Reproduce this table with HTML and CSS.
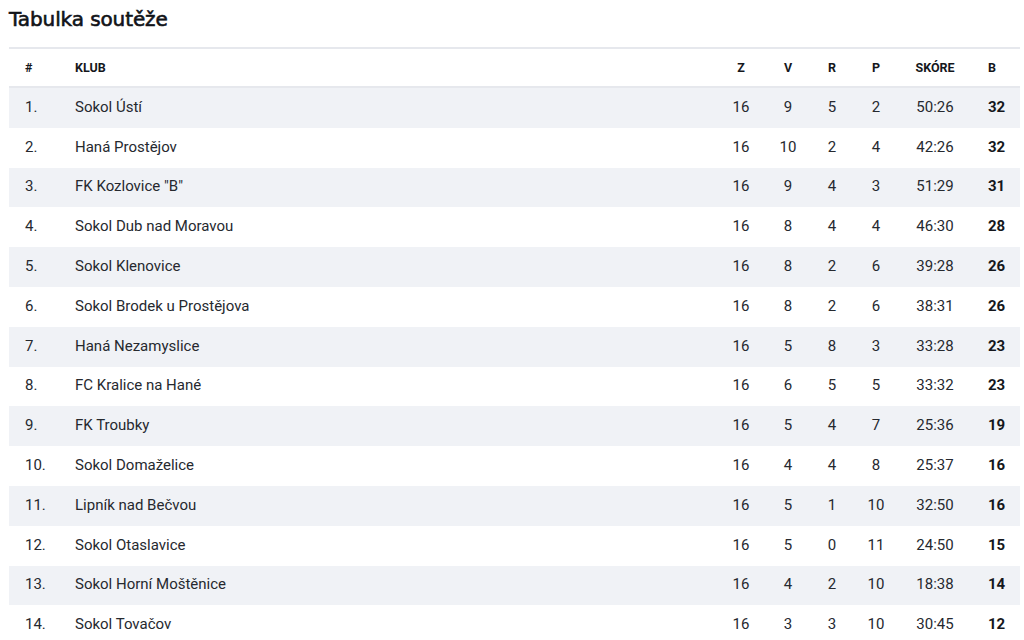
FILE: index.html
```html
<!DOCTYPE html>
<html lang="cs">
<head>
<meta charset="utf-8">
<title>Tabulka soutěže</title>
<link rel="stylesheet" href="styles.css">
</head>
<body>
<main class="page">
  <h2 class="title">Tabulka soutěže</h2>
  <table class="standings">
    <colgroup>
      <col class="c-pos"><col class="c-club"><col class="c-z"><col class="c-v"><col class="c-r"><col class="c-p"><col class="c-score"><col class="c-pts">
    </colgroup>
    <thead>
      <tr><th class="l">#</th><th class="l">Klub</th><th>Z</th><th>V</th><th>R</th><th>P</th><th>Skóre</th><th class="l">B</th></tr>
    </thead>
    <tbody>
      <tr><td class="l">1.</td><td class="l">Sokol Ústí</td><td>16</td><td>9</td><td>5</td><td>2</td><td>50:26</td><td class="pts">32</td></tr>
      <tr><td class="l">2.</td><td class="l">Haná Prostějov</td><td>16</td><td>10</td><td>2</td><td>4</td><td>42:26</td><td class="pts">32</td></tr>
      <tr><td class="l">3.</td><td class="l">FK Kozlovice "B"</td><td>16</td><td>9</td><td>4</td><td>3</td><td>51:29</td><td class="pts">31</td></tr>
      <tr><td class="l">4.</td><td class="l">Sokol Dub nad Moravou</td><td>16</td><td>8</td><td>4</td><td>4</td><td>46:30</td><td class="pts">28</td></tr>
      <tr><td class="l">5.</td><td class="l">Sokol Klenovice</td><td>16</td><td>8</td><td>2</td><td>6</td><td>39:28</td><td class="pts">26</td></tr>
      <tr><td class="l">6.</td><td class="l">Sokol Brodek u Prostějova</td><td>16</td><td>8</td><td>2</td><td>6</td><td>38:31</td><td class="pts">26</td></tr>
      <tr><td class="l">7.</td><td class="l">Haná Nezamyslice</td><td>16</td><td>5</td><td>8</td><td>3</td><td>33:28</td><td class="pts">23</td></tr>
      <tr><td class="l">8.</td><td class="l">FC Kralice na Hané</td><td>16</td><td>6</td><td>5</td><td>5</td><td>33:32</td><td class="pts">23</td></tr>
      <tr><td class="l">9.</td><td class="l">FK Troubky</td><td>16</td><td>5</td><td>4</td><td>7</td><td>25:36</td><td class="pts">19</td></tr>
      <tr><td class="l">10.</td><td class="l">Sokol Domaželice</td><td>16</td><td>4</td><td>4</td><td>8</td><td>25:37</td><td class="pts">16</td></tr>
      <tr><td class="l">11.</td><td class="l">Lipník nad Bečvou</td><td>16</td><td>5</td><td>1</td><td>10</td><td>32:50</td><td class="pts">16</td></tr>
      <tr><td class="l">12.</td><td class="l">Sokol Otaslavice</td><td>16</td><td>5</td><td>0</td><td>11</td><td>24:50</td><td class="pts">15</td></tr>
      <tr><td class="l">13.</td><td class="l">Sokol Horní Moštěnice</td><td>16</td><td>4</td><td>2</td><td>10</td><td>18:38</td><td class="pts">14</td></tr>
      <tr><td class="l">14.</td><td class="l">Sokol Tovačov</td><td>16</td><td>3</td><td>3</td><td>10</td><td>30:45</td><td class="pts">12</td></tr>
    </tbody>
  </table>
</main>
</body>
</html>
```
FILE: styles.css
```css
html, body {
  margin: 0;
  padding: 0;
  background: #ffffff;
}
body {
  font-family: Roboto, "Liberation Sans", sans-serif;
  color: #1d2026;
}
.page {
  padding: 0 4px 0 9px;
}
.title {
  margin: 0;
  padding-top: 6px;
  height: 47px;
  box-sizing: border-box;
  font-family: "DejaVu Sans", sans-serif;
  font-size: 20px;
  font-weight: 400;
  -webkit-text-stroke: 0.6px #111318;
  letter-spacing: -0.1px;
  color: #111318;
  line-height: 26px;
}
.standings {
  width: 1011px;
  border-collapse: collapse;
  table-layout: fixed;
  font-size: 15px;
}
.c-pos { width: 50px; }
.c-club { width: 659px; }
.c-z { width: 46px; }
.c-v { width: 48px; }
.c-r { width: 40px; }
.c-p { width: 48px; }
.c-score { width: 70px; }
.c-pts { width: 50px; }
.standings thead tr {
  border-top: 2px solid #e6e8ed;
  border-bottom: 2px solid #e6e8ed;
}
.standings th {
  height: 37px;
  padding: 0;
  font-size: 12.5px;
  font-weight: 700;
  text-transform: uppercase;
  color: #15171c;
  text-align: center;
}
.standings td {
  height: 37.8px;
  padding: 0 0 2px;
  text-align: center;
  color: #26292f;
}
.standings th.l,
.standings td.l {
  text-align: left;
  padding-left: 16px;
}
.standings th:last-child,
.standings td.pts {
  text-align: left;
  padding-left: 18px;
}
.standings td.pts {
  font-weight: 700;
  color: #15171c;
}
.standings tbody tr:nth-child(odd) {
  background: #f0f2f6;
}
```
